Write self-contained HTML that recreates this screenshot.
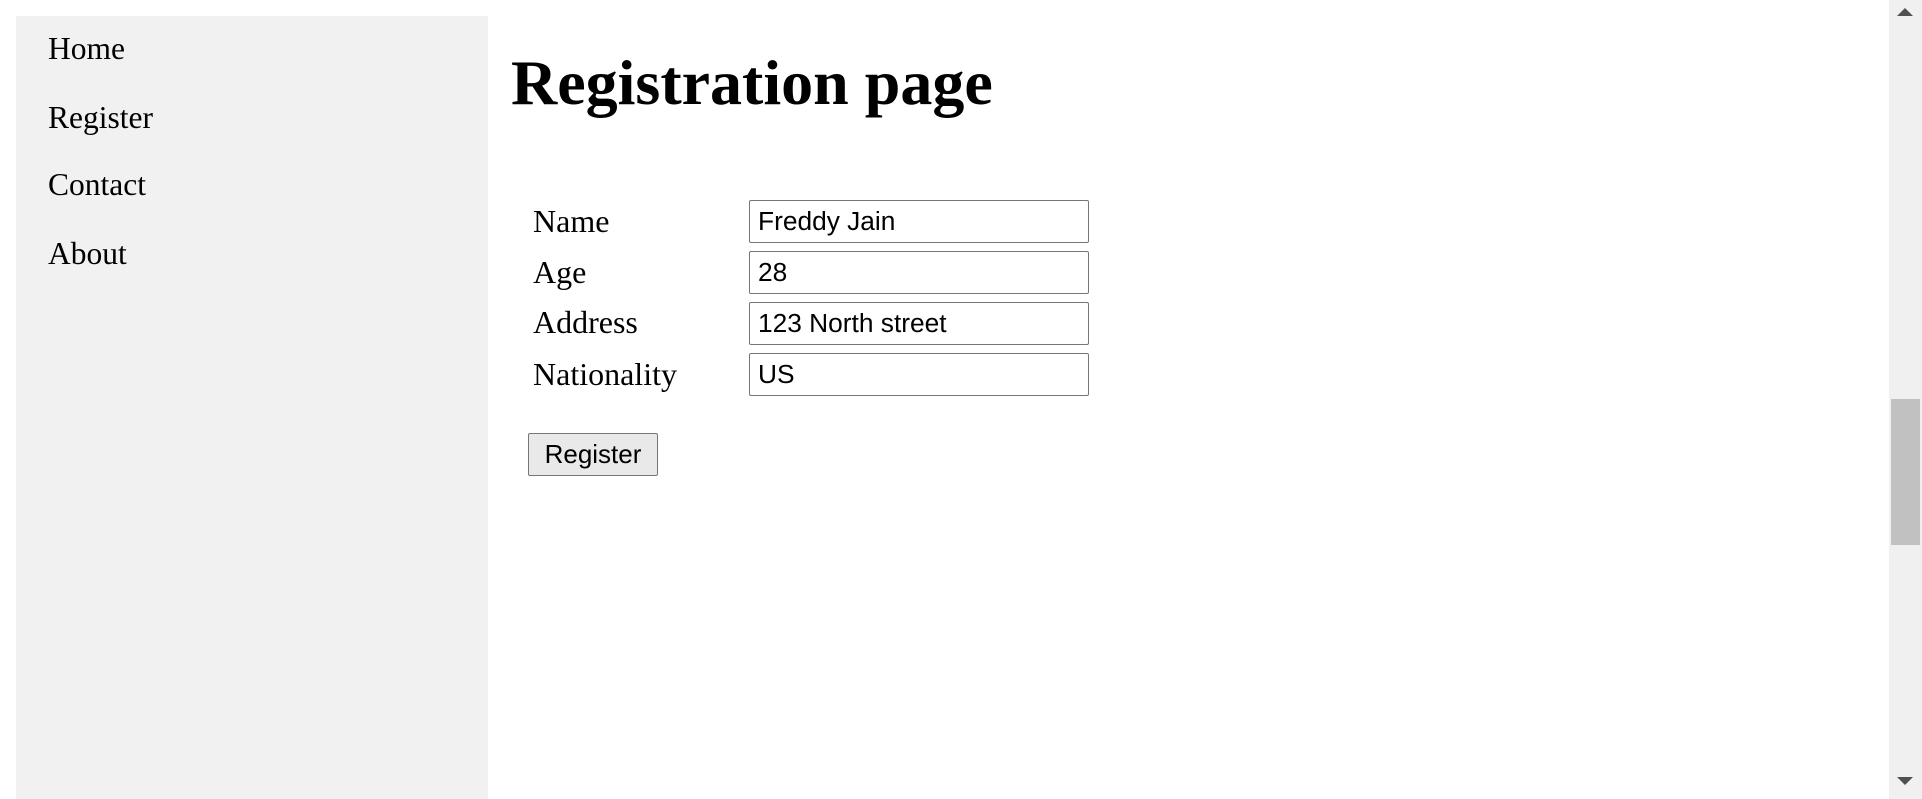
<!DOCTYPE html>
<html><head><style>
html,body{margin:0;padding:0;width:1922px;height:799px;overflow:hidden;background:#fff;font-family:"Liberation Serif",serif;}
.side{position:absolute;left:16px;top:16px;width:472px;height:783px;background:#f1f1f1;}
.nav{position:absolute;left:48px;font-size:31.5px;color:#000;line-height:34px;}
h1{position:absolute;left:511px;top:45px;margin:0;font-size:64px;line-height:76px;font-weight:bold;}
.lbl{position:absolute;left:533px;font-size:32px;line-height:34px;}
.inp{position:absolute;left:749px;border:1px solid #767676;border-radius:2px;font-family:"Liberation Sans",sans-serif;font-size:26.3px;line-height:41px;padding-left:8px;box-sizing:border-box;width:340px;height:43px;}
.btn{position:absolute;left:528px;top:433px;width:130px;height:43px;box-sizing:border-box;border:1px solid #767676;border-radius:2px;background:#e9e9e9;font-family:"Liberation Sans",sans-serif;font-size:26px;text-align:center;line-height:41px;}
.sb{position:absolute;left:1889px;top:0;width:33px;height:799px;background:#f0f0f0;}
.th{position:absolute;left:1891px;top:399px;width:29px;height:146px;background:#c1c1c1;}
</style></head><body>
<div class="side"></div>
<div class="nav" style="top:32px">Home</div>
<div class="nav" style="top:101px">Register</div>
<div class="nav" style="top:168px">Contact</div>
<div class="nav" style="top:237px">About</div>
<h1>Registration page</h1>
<div class="lbl" style="top:204px">Name</div>
<div class="lbl" style="top:255px">Age</div>
<div class="lbl" style="top:305px">Address</div>
<div class="lbl" style="top:357px">Nationality</div>
<div class="inp" style="top:200px">Freddy Jain</div>
<div class="inp" style="top:251px">28</div>
<div class="inp" style="top:302px">123 North street</div>
<div class="inp" style="top:353px">US</div>
<div class="btn">Register</div>
<div class="sb"></div>
<div class="th"></div>
<svg style="position:absolute;left:1897px;top:8px" width="16" height="9"><polygon points="0,8 8,0 16,8" fill="#505050"/></svg>
<svg style="position:absolute;left:1897px;top:777px" width="16" height="9"><polygon points="0,0 16,0 8,8" fill="#505050"/></svg>
</body></html>
